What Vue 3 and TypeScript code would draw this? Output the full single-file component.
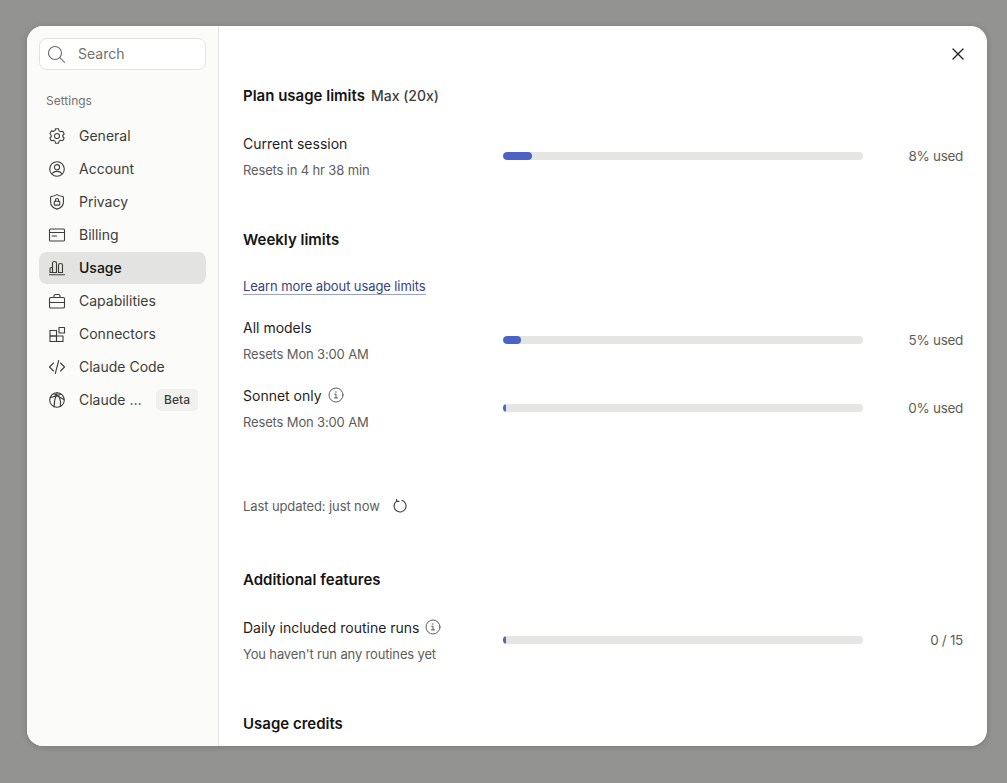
<template>
  <div class="backdrop">
    <div class="modal">
      <aside class="sidebar">
        <div class="search">
          <svg class="search-icon" width="18" height="18" viewBox="0 0 18 18" fill="none" stroke="#6f6e69" stroke-width="1.1" stroke-linecap="round">
            <circle cx="7" cy="8" r="6.5" />
            <path d="M11.8 12.6l4.700 4.700" />
          </svg>
          <span class="search-text">Search</span>
        </div>
        <div class="side-label">Settings</div>
        <nav class="nav">
          <div v-for="item in navItems" :key="item.label" class="nav-item" :class="{ active: item.label === 'Usage' }">
            <svg width="18" height="18" viewBox="0 0 18 18" fill="none" stroke="#3d3d3a" stroke-width="1.1" stroke-linecap="round" stroke-linejoin="round">
              <path v-for="d in item.paths" :key="d" :d="d" />
            </svg>
            <span class="nav-text">{{ item.label }}</span>
            <span v-if="item.badge" class="badge">{{ item.badge }}</span>
          </div>
        </nav>
      </aside>

      <main class="content">
        <button class="close">
          <svg width="12" height="12" viewBox="0 0 12 12" stroke="#1f1e1d" stroke-width="1.3" stroke-linecap="round">
            <path d="M1 1l10 10M11 1L1 11" />
          </svg>
        </button>

        <section v-for="section in sections" :key="section.title" class="section">
          <h2 class="title">{{ section.title }}<span v-if="section.plan" class="plan">{{ section.plan }}</span></h2>
          <a v-if="section.link" class="link" href="#">{{ section.link }}</a>

          <div v-for="row in section.rows" :key="row.label" class="row">
            <div>
              <div class="row-label">
                <span>{{ row.label }}</span>
                <svg v-if="row.info" width="16" height="16" viewBox="0 0 16 16" fill="none" stroke="#5e5d59" stroke-linecap="round">
                  <circle cx="8" cy="8" r="7" />
                  <path d="M6.600 7.200H8v3.600M6.400 10.900h3.200" />
                  <circle cx="7.900" cy="5" r="0.7" fill="#5e5d59" stroke="none" />
                </svg>
              </div>
              <div class="row-sub">{{ row.sub }}</div>
            </div>
            <div class="track">
              <div class="fill" :style="{ width: row.percent + '%' }"></div>
            </div>
            <div class="row-value">{{ row.value }}</div>
          </div>

          <div v-if="section.updated" class="updated">
            <span>{{ section.updated }}</span>
            <svg width="16" height="16" viewBox="0 0 16 16" fill="none" stroke="#3d3d3a" stroke-width="1.1" stroke-linecap="round" stroke-linejoin="round">
              <path d="M4.600 3.100A6 6 0 1 0 9.900 2.300" />
              <path d="M4.600 1.200v2.200h2.300" />
            </svg>
          </div>
        </section>
      </main>
    </div>
  </div>
</template>

<script setup lang="ts">
interface UsageRow {
  label: string;
  sub: string;
  percent: number;
  value: string;
  info?: boolean;
}

interface Section {
  title: string;
  plan?: string;
  link?: string;
  updated?: string;
  rows: UsageRow[];
}

const sections: Section[] = [
  {
    title: 'Plan usage limits',
    plan: 'Max (20x)',
    rows: [{ label: 'Current session', sub: 'Resets in 4 hr 38 min', percent: 8, value: '8% used' }],
  },
  {
    title: 'Weekly limits',
    link: 'Learn more about usage limits',
    updated: 'Last updated: just now',
    rows: [
      { label: 'All models', sub: 'Resets Mon 3:00 AM', percent: 5, value: '5% used' },
      { label: 'Sonnet only', sub: 'Resets Mon 3:00 AM', percent: 0.8, value: '0% used', info: true },
    ],
  },
  {
    title: 'Additional features',
    rows: [
      { label: 'Daily included routine runs', sub: "You haven't run any routines yet", percent: 0.8, value: '0 / 15', info: true },
    ],
  },
  { title: 'Usage credits', rows: [] },
];

const navItems: { label: string; badge?: string; paths: string[] }[] = [
  {
    label: 'General',
    paths: [
      'M7.500 1.800h3l.6 2.100 1.500.9 2.100-.5 1.500 2.600-1.500 1.600v1l1.500 1.600-1.500 2.600-2.100-.5-1.500.9-.6 2.100h-3l-.6-2.100-1.500-.9-2.100.5-1.500-2.600 1.500-1.600v-1L1.900 6.500l1.500-2.600 2.100.5 1.500-.9z',
      'M9 6.500a2.500 2.500 0 1 0 0 5 2.500 2.500 0 0 0 0-5z',
    ],
  },
  {
    label: 'Account',
    paths: [
      'M9 1.700a7.300 7.300 0 1 0 0 14.600A7.300 7.300 0 0 0 9 1.700z',
      'M9 4.600a2.600 2.600 0 1 0 0 5.200 2.600 2.600 0 0 0 0-5.200z',
      'M4.200 13.500c1-1.400 2.600-2.100 4.800-2.100s3.800.7 4.800 2.100',
    ],
  },
  {
    label: 'Privacy',
    paths: [
      'M9 1.600c1.600 1 3.600 1.700 5.800 1.900.4.100.6.300.6.700v5c0 3.400-2.500 5.700-6.400 6.900-3.900-1.200-6.400-3.500-6.400-6.900v-5c0-.4.200-.6.6-.7C5.400 3.300 7.400 2.600 9 1.600z',
      'M6.800 8.200h4.400c.3 0 .5.200.5.500v2.900c0 .3-.2.500-.5.500H6.800c-.3 0-.5-.2-.5-.5V8.700c0-.3.200-.5.500-.5z',
      'M7.500 8.200V7a1.500 1.500 0 0 1 3 0v1.200',
    ],
  },
  {
    label: 'Billing',
    paths: [
      'M2.600 3h12.800c.6 0 1.100.5 1.100 1.100v9.800c0 .6-.5 1.100-1.100 1.100H2.600c-.6 0-1.100-.5-1.100-1.100V4.100C1.500 3.500 2 3 2.600 3z',
      'M1.500 6.500h15',
      'M4 10h4.500',
    ],
  },
  {
    label: 'Usage',
    paths: [
      'M1.500 15.800h15',
      'M2 13.500V9.700c0-.7.400-1.200 1.200-1.200s1.300.5 1.300 1.200v3.800z',
      'M4.500 13.500V4c0-.9.700-1.500 1.900-1.500 1.200 0 2.100.6 2.100 1.500v9.500z',
      'M10.500 13.500V6c0-.9.700-1.500 1.900-1.500 1.200 0 2.100.6 2.100 1.500v7.500z',
    ],
  },
  {
    label: 'Capabilities',
    paths: [
      'M2.800 5.500h12.400c.7 0 1.300.6 1.300 1.300v7.900c0 .7-.6 1.300-1.300 1.300H2.800c-.7 0-1.300-.6-1.300-1.300V6.800c0-.7.6-1.300 1.300-1.300z',
      'M6 5.500V4c0-.8.6-1.500 1.400-1.500h3.200c.8 0 1.400.7 1.400 1.500v1.500',
      'M1.500 10.500h15',
    ],
  },
  {
    label: 'Connectors',
    paths: [
      'M2 5.500h6.500v5.500H2z',
      'M2 11h6.500v5.500H2z',
      'M8.500 11H15v5.500H8.500z',
      'M11 2.500h5.500V8H11z',
    ],
  },
  {
    label: 'Claude Code',
    paths: ['M5.500 5L1.500 9l4 4', 'M12.500 5l4 4-4 4', 'M10.700 2.500L7.300 15.500'],
  },
  {
    label: 'Claude …',
    badge: 'Beta',
    paths: [
      'M9 1.700a7.300 7.300 0 1 0 0 14.600A7.300 7.300 0 0 0 9 1.700z',
      'M5.800 2.500c2.400 1.700 7.300 4.700 10 6',
      'M2.200 6.500c3-.7 8.800-2 10.300-3.500',
      'M6.200 15.800C6 11.500 7 6.500 9.300 1.800',
      'M12.300 15.500c.5-2.800.2-6.500-1-9.500',
    ],
  },
];
</script>

<style>
body {
  background: #939391;
}
</style>

<style scoped>
.backdrop {
  width: 1007px;
  height: 783px;
  background: #939391;
  padding: 26px 20px 37px 27px;
  box-sizing: border-box;
  font-family: Inter, "Noto Sans", sans-serif;
}

.modal {
  display: flex;
  height: 720px;
  width: 960px;
  background: #fff;
  border-radius: 16px;
  overflow: hidden;
  box-shadow: 0 1px 6px rgba(0, 0, 0, 0.18);
}

.sidebar {
  width: 192px;
  flex: none;
  box-sizing: border-box;
  padding: 12px 12px 0;
  background: #fbfbfa;
  border-right: 1px solid #e6e6e4;
}

.search {
  display: flex;
  align-items: center;
  gap: 12px;
  height: 32px;
  box-sizing: border-box;
  width: 167px;
  padding-left: 8px;
  background: #fff;
  border: 1px solid #e2e2e0;
  border-radius: 8px;
  font-size: 14px;
  color: #73726c;
}

.search-icon {
  flex: none;
}

.search-text {
  padding-bottom: 1px;
}

.side-label {
  margin: 23px 0 0 7px;
  height: 16px;
  line-height: 16px;
  font-size: 12px;
  color: #73726c;
}

.nav {
  margin-top: 11px;
  display: flex;
  flex-direction: column;
  gap: 1px;
  width: 167px;
}

.nav-item {
  display: flex;
  align-items: center;
  gap: 13px;
  height: 32px;
  padding: 0 8px 0 9px;
  border-radius: 8px;
  font-size: 14px;
  color: #3d3d3a;
}

.nav-item svg {
  flex: none;
}

.nav-item.active {
  background: #e3e3e1;
  color: #141413;
  font-weight: 500;
}

.nav-text {
  flex: 1;
  min-width: 0;
  white-space: nowrap;
  padding-bottom: 2px;
}

.badge {
  flex: none;
  padding: 0 8px;
  height: 22px;
  line-height: 22px;
  border-radius: 5px;
  background: #f0f0ee;
  font-size: 12px;
  font-weight: 500;
  color: #3d3d3a;
}

.content {
  position: relative;
  flex: 1;
  padding: 58px 24px 0;
  overflow: hidden;
}

.close {
  position: absolute;
  top: 22px;
  right: 23px;
  padding: 0;
  border: 0;
  background: none;
  line-height: 0;
}

.section + .section {
  margin-top: 48px;
}

.title {
  margin: 0;
  height: 24px;
  line-height: 24px;
  font-size: 15px;
  font-weight: 600;
  color: #141413;
}

.plan {
  margin-left: 6px;
  font-size: 14px;
  font-weight: 500;
  color: #3d3d3a;
}

.link {
  display: block;
  box-sizing: border-box;
  width: fit-content;
  margin-top: 24px;
  height: 19px;
  line-height: 20px;
  font-size: 13px;
  letter-spacing: -0.1px;
  color: #36437f;
  text-decoration: none;
  border-bottom: 1px solid #9aa2c4;
}

.row {
  display: grid;
  grid-template-columns: 260px 360px 100px;
  align-items: center;
  height: 48px;
  margin-top: 20px;
}

.title + .row {
  margin-top: 24px;
}

.link + .row {
  margin-top: 21px;
}

.row-label {
  display: flex;
  align-items: center;
  gap: 6px;
  height: 22px;
  font-size: 14px;
  color: #1f1e1d;
}

.row-label svg {
  flex: none;
}

.row-sub {
  height: 20px;
  line-height: 20px;
  margin-top: 6px;
  font-size: 13px;
  letter-spacing: -0.15px;
  color: #5e5d59;
}

.track {
  height: 8px;
  border-radius: 4px;
  background: #e5e5e4;
  overflow: hidden;
}

.fill {
  height: 100%;
  border-radius: 4px;
  background: #4a63c5;
}

.row-value {
  text-align: right;
  font-size: 13.5px;
  letter-spacing: -0.3px;
  color: #5e5d59;
}

.updated {
  display: flex;
  align-items: center;
  gap: 12px;
  margin-top: 64px;
  padding-bottom: 4px;
  height: 20px;
  font-size: 13px;
  letter-spacing: -0.1px;
  color: #5e5d59;
}
</style>
